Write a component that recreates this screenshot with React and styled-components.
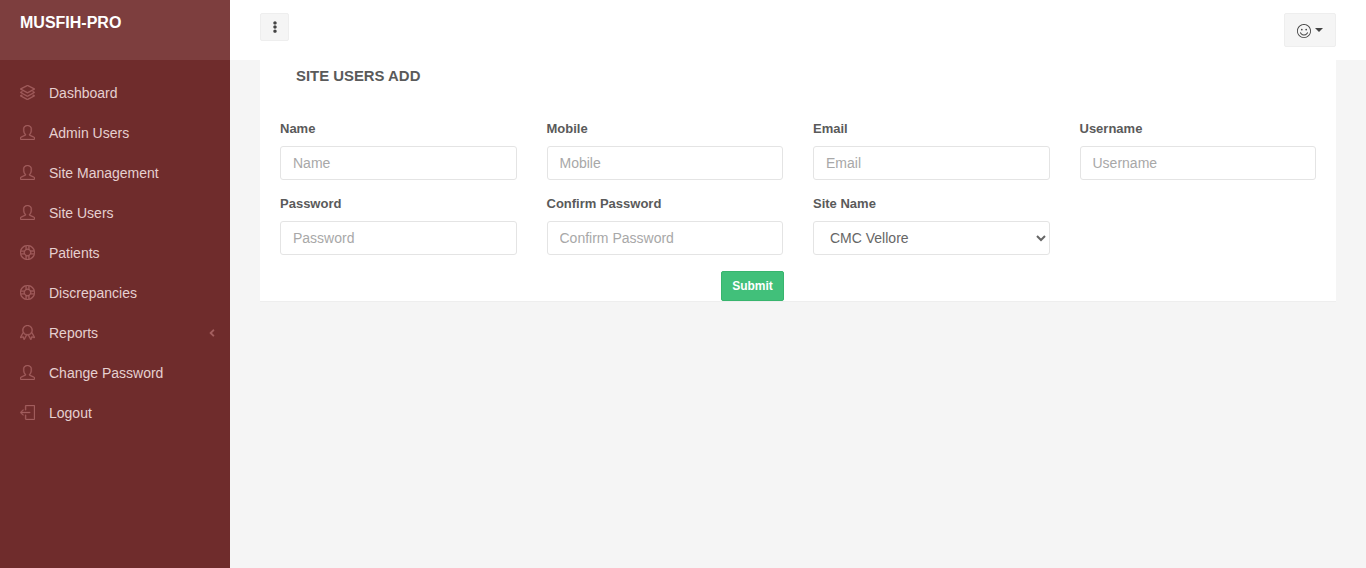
import React from "react";
import styled, { createGlobalStyle } from "styled-components";
import { FaEllipsisV, FaAngleLeft } from "react-icons/fa";
import {
  SlLayers,
  SlUser,
  SlSupport,
  SlBadge,
  SlLogout,
  SlEmotsmile
} from "react-icons/sl";

const GlobalStyle = createGlobalStyle`
  * {
    box-sizing: border-box;
  }
  html, body {
    margin: 0;
    height: 100%;
    background: #f5f5f5;
    font-family: "Liberation Sans", Arial, sans-serif;
    font-size: 14px;
    color: #5a5a5a;
  }
`;

const Layout = styled.div`
  display: flex;
  height: 568px;
  overflow: hidden;
`;

const Sidebar = styled.aside`
  width: 230px;
  flex-shrink: 0;
  background: #6f2c2c;
`;

const Brand = styled.div`
  height: 60px;
  padding: 14px 20px 0;
  background: #7d3e3e;
  color: #fff;
  font-size: 16px;
  font-weight: 700;
  line-height: 18px;
`;

const Menu = styled.ul`
  list-style: none;
  margin: 0;
  padding: 13px 0 0;
`;

const MenuItem = styled.li`
  display: flex;
  align-items: center;
  height: 40px;
  padding: 0 13px 0 20px;
  color: #e6d0d0;
  font-size: 14px;

  svg {
    width: 15px;
    height: 15px;
    margin-bottom: 2px;
    color: #a35f5f;
    stroke: currentColor;
    stroke-width: 24px;
    flex-shrink: 0;
  }
`;

const MenuLabel = styled.span`
  flex: 1;
  margin-left: 14px;
`;

const Arrow = styled(FaAngleLeft)`
  && {
    width: 10px;
    height: 12px;
    margin-bottom: 0;
    stroke-width: 0;
    color: #a35f5f;
  }
`;

const Main = styled.main`
  flex: 1;
  min-width: 0;
`;

const Topbar = styled.header`
  height: 60px;
  padding: 0 30px;
  background: #fff;
  display: flex;
  align-items: flex-start;
  justify-content: space-between;
`;

const ToggleButton = styled.button`
  width: 29px;
  height: 28px;
  margin-top: 13px;
  padding: 0;
  display: flex;
  align-items: center;
  justify-content: center;
  background: #f5f5f5;
  border: 1px solid #eee;
  border-radius: 2px;
  color: #444;

  svg {
    width: 12px;
    height: 12px;
    margin-bottom: 1px;
  }
`;

const UserButton = styled.button`
  width: 52px;
  height: 34px;
  margin-top: 13px;
  padding: 0;
  display: flex;
  align-items: center;
  justify-content: center;
  gap: 4px;
  background: #f5f5f5;
  border: 1px solid #eee;
  border-radius: 2px;
  color: #444;

  svg {
    width: 14px;
    height: 14px;
    margin-top: 2px;
  }
`;

const Caret = styled.span`
  width: 0;
  height: 0;
  border-top: 4px solid #444;
  border-left: 4px solid transparent;
  border-right: 4px solid transparent;
`;

const Content = styled.section`
  padding: 0 30px;
`;

const Card = styled.div`
  height: 241px;
  padding: 0 20px;
  background: #fff;
  box-shadow: 0 1px 0 #eeeeee;
`;

const CardTitle = styled.h2`
  margin: 0;
  padding: 7px 16px 0;
  height: 50px;
  font-size: 14.9px;
  line-height: 18px;
  font-weight: 700;
  color: #5a5a5a;
  text-transform: uppercase;
`;

const FormGrid = styled.form`
  display: grid;
  grid-template-columns: repeat(4, 1fr);
  column-gap: 30px;
  row-gap: 15px;
  padding-top: 10px;
`;

const Field = styled.div`
  display: flex;
  flex-direction: column;
`;

const Label = styled.label`
  height: 26px;
  padding-top: 1px;
  font-size: 13px;
  line-height: 16px;
  font-weight: 700;
  color: #5a5a5a;
`;

const Input = styled.input`
  height: 34px;
  padding: 0 12px;
  border: 1px solid #e4e4e4;
  border-radius: 3px;
  background: #fff;
  font: inherit;
  color: #5a5a5a;

  &::placeholder {
    color: #a8a8a8;
    opacity: 1;
  }
`;

const Select = styled.select`
  height: 34px;
  padding: 0 12px;
  border: 1px solid #e4e4e4;
  border-radius: 3px;
  background: #fff;
  font: inherit;
  color: #666;
`;

const SubmitRow = styled.div`
  padding: 16px 0 0 441px;
`;

const SubmitButton = styled.button`
  display: block;
  width: 63px;
  height: 30px;
  padding: 0;
  border: 1px solid #38b56e;
  border-radius: 2px;
  background: #41c07a;
  color: #fff;
  font-family: inherit;
  font-size: 12px;
  font-weight: 700;
`;

const menu = [
  { label: "Dashboard", icon: SlLayers },
  { label: "Admin Users", icon: SlUser },
  { label: "Site Management", icon: SlUser },
  { label: "Site Users", icon: SlUser },
  { label: "Patients", icon: SlSupport },
  { label: "Discrepancies", icon: SlSupport },
  { label: "Reports", icon: SlBadge, submenu: true },
  { label: "Change Password", icon: SlUser },
  { label: "Logout", icon: SlLogout }
];

const fields = [
  { label: "Name", type: "text" },
  { label: "Mobile", type: "text" },
  { label: "Email", type: "email" },
  { label: "Username", type: "text" },
  { label: "Password", type: "password" },
  { label: "Confirm Password", type: "password" }
];

const App = () => (
  <Layout>
    <GlobalStyle />
    <Sidebar>
      <Brand>MUSFIH-PRO</Brand>
      <Menu>
        {menu.map(({ label, icon: Icon, submenu }) => (
          <MenuItem key={label}>
            <Icon />
            <MenuLabel>{label}</MenuLabel>
            {submenu && <Arrow />}
          </MenuItem>
        ))}
      </Menu>
    </Sidebar>
    <Main>
      <Topbar>
        <ToggleButton type="button">
          <FaEllipsisV />
        </ToggleButton>
        <UserButton type="button">
          <SlEmotsmile />
          <Caret />
        </UserButton>
      </Topbar>
      <Content>
        <Card>
          <CardTitle>Site Users Add</CardTitle>
          <FormGrid>
            {fields.map(field => (
              <Field key={field.label}>
                <Label>{field.label}</Label>
                <Input type={field.type} placeholder={field.label} />
              </Field>
            ))}
            <Field>
              <Label>Site Name</Label>
              <Select defaultValue="CMC Vellore">
                <option>CMC Vellore</option>
              </Select>
            </Field>
          </FormGrid>
          <SubmitRow>
            <SubmitButton type="button">Submit</SubmitButton>
          </SubmitRow>
        </Card>
      </Content>
    </Main>
  </Layout>
);

export default App;
